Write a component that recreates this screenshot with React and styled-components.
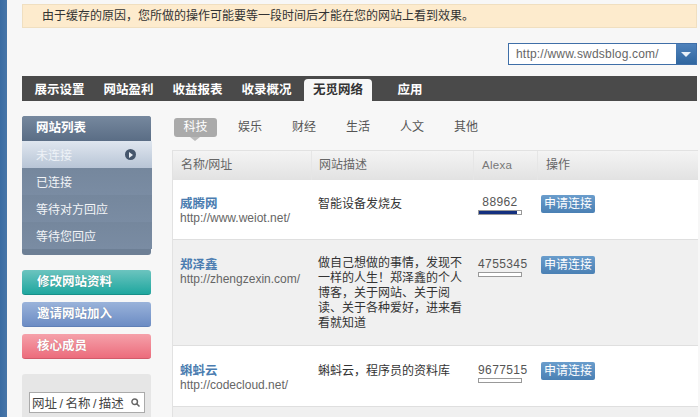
import React from "react";
import styled, { createGlobalStyle } from "styled-components";

const Global = createGlobalStyle`
  html, body { margin: 0; padding: 0; background: #f7f7f7; overflow: hidden; }
  * { box-sizing: border-box; }
  body { font-family: "Liberation Sans", "Noto Sans CJK SC", sans-serif; font-size: 12px; color: #333; }
`;

const Page = styled.div`
  display: flex; width: 700px; height: 417px; overflow: hidden; background: #f7f7f7;
`;
const Strip = styled.div`
  flex: 0 0 7px; background: linear-gradient(90deg, #3a6ca3, #4876a8);
`;
const Main = styled.div`
  flex: 1; padding: 4px 3px 0 15px; min-width: 0;
`;
const Notice = styled.div`
  height: 24px; line-height: 22px; padding-left: 19px; background: #fdebcd;
  border: 1px solid #f0dfc0; font-size: 12px; color: #333;
`;
const SelectRow = styled.div`
  display: flex; justify-content: flex-end; margin-top: 15px;
`;
const SiteSelect = styled.div`
  display: flex; width: 189px; height: 22px; border: 1px solid #3f6fa8; background: #fff;
`;
const SiteText = styled.div`
  flex: 1; padding-left: 7px; line-height: 20px; font-size: 12px; letter-spacing: 0.2px; color: #666;
`;
const Arrow = styled.div`
  flex: 0 0 20px; display: flex; align-items: center; justify-content: center;
  background: linear-gradient(#4f82bb, #2f669f);
  &::after {
    content: ""; border-left: 5px solid transparent; border-right: 5px solid transparent;
    border-top: 5px solid #e8f0f8;
  }
`;
const Nav = styled.div`
  display: flex; align-items: flex-end; height: 25px; margin-top: 11px; padding-left: 11px; background: #4a4a4a;
`;
const NavTab = styled.div`
  height: 22px; line-height: 23px; font-size: 12.5px; font-weight: 700; white-space: nowrap;
  margin-left: ${p => p.$gap}px; text-align: center;
  width: ${p => p.$w}px;
  color: ${p => (p.$active ? "#333" : "#fff")};
  background: ${p => (p.$active ? "#f7f7f7" : "transparent")};
  border-radius: ${p => (p.$active ? "4px 4px 0 0" : "0")};
`;
const Columns = styled.div`
  display: flex; margin-top: 15px;
`;
const Side = styled.div`
  flex: 0 0 129px; width: 129px;
`;
const SideList = styled.div`
  height: 139px; border-radius: 3px; background: #6d7f95;
`;
const SideHead = styled.div`
  height: 25px; line-height: 25px; padding-left: 14px; font-size: 12.5px; font-weight: 700; color: #fff;
  background: linear-gradient(#76889e, #5a6d85); border-radius: 3px 3px 0 0;
`;
const SideItem = styled.div`
  display: flex; align-items: center; justify-content: space-between;
  width: 130px; height: 27px; padding: 0 16px 0 14px; font-size: 12px;
  color: ${p => (p.$active ? "#eef2f7" : "#f2f4f7")};
  background: ${p => (p.$active ? "linear-gradient(#dfe6ef, #b8c5d6)" : "linear-gradient(#75879d, #7a8ca3)")};
`;
const Dot = styled.span`
  width: 11px; height: 11px; border-radius: 50%; background: #45566c; position: relative;
  &::after {
    content: ""; position: absolute; left: 4px; top: 2.5px;
    border-left: 4px solid #e8edf3; border-top: 3px solid transparent; border-bottom: 3px solid transparent;
  }
`;
const SideButtons = styled.div`
  display: flex; flex-direction: column; gap: 7px; margin-top: 15px;
`;
const ColorButton = styled.div`
  height: 25px; line-height: 24px; padding-left: 15px; font-size: 12.5px; font-weight: 700; color: #fff;
  border-radius: 3px; text-shadow: 0 0 1px rgba(0, 0, 0, 0.25);
  background: linear-gradient(${p => p.$from}, ${p => p.$to});
  border-bottom: 1px solid ${p => p.$edge};
`;
const SearchPanel = styled.div`
  height: 60px; margin-top: 15px; padding: 18px 6px 0 7px; background: #e6e6e6; border-radius: 3px;
`;
const SearchBox = styled.div`
  display: flex; align-items: center; justify-content: space-between; height: 21px;
  padding: 0 4px 0 2px; border: 1px solid #aaa; background: #fff; font-size: 12.5px; word-spacing: -1px; color: #444;
`;
const Content = styled.div`
  flex: 1; margin-left: 21px; min-width: 0;
`;
const Cats = styled.div`
  display: flex; height: 21px; margin-left: 2px; padding-top: 2px;
`;
const Cat = styled.div`
  position: relative; width: ${p => (p.$active ? 43 : 24)}px; height: 19px; line-height: 18px; text-align: center;
  margin-right: ${p => (p.$active ? 21 : 30)}px; font-size: 12px; white-space: nowrap;
  color: ${p => (p.$active ? "#fff" : "#555")};
  background: ${p => (p.$active ? "#aaa" : "transparent")};
  border-radius: 3px;
  ${p => p.$active && `&::after {
    content: ""; position: absolute; left: 16px; top: 19px;
    border-left: 5px solid transparent; border-right: 5px solid transparent; border-top: 4px solid #bbb;
  }`}
`;
const Table = styled.div`
  margin: 13px -1px 0 0; border-left: 1px solid #e2e2e2; border-top: 1px solid #e2e2e2;
`;
const Head = styled.div`
  display: grid; grid-template-columns: 138px 162px 64px 1fr; height: 29px;
  background: linear-gradient(#f4f4f4, #e2e2e2);
`;
const HeadCell = styled.div`
  padding-left: ${p => p.$pad}px; line-height: 29px; font-size: ${p => (p.$latin ? 11.5 : 12)}px;
  color: ${p => (p.$latin ? "#777" : "#666")};
  border-left: ${p => (p.$first ? "none" : "1px solid #e6e6e6")};
  letter-spacing: ${p => (p.$latin ? "0.3px" : "0")};
`;
const Row = styled.div`
  display: grid; grid-template-columns: 138px 162px 64px 1fr; height: ${p => p.$h}px;
  background: ${p => (p.$alt ? "#f0f0f0" : "#fff")}; border-bottom: 1px solid #dfdfdf;
`;
const NameCell = styled.div`
  padding: ${p => p.$top}px 0 0 7px;
`;
const SiteName = styled.div`
  font-size: 12.5px; font-weight: 700; line-height: 15px; color: #4a7cb0;
`;
const SiteUrl = styled.div`
  margin-top: -1px; font-size: 12px; line-height: 14px; color: #666; white-space: nowrap;
`;
const DescCell = styled.div`
  padding: ${p => p.$top}px 0 0 7px; font-size: 12px; line-height: 15px; color: #333; width: 153px;
`;
const RankCell = styled.div`
  padding: ${p => p.$top}px 0 0 5px;
`;
const RankNum = styled.div`
  width: ${p => (p.$center ? 44 : 50)}px; text-align: ${p => (p.$center ? "center" : "left")}; white-space: nowrap;
  font-size: 12px; line-height: 13px; letter-spacing: 0.4px; color: #555;
`;
const RankBar = styled.div`
  width: 44px; height: 5px; margin-top: 1px; border: 1px solid #999; background: #fff;
  &::after { content: ""; display: block; height: 100%; width: var(--fill); background: #14307f; }
`;
const ActionCell = styled.div`
  padding: ${p => p.$top}px 0 0 4px;
`;
const ApplyButton = styled.div`
  width: 54px; height: 18px; line-height: 19px; text-align: center; font-size: 12px; color: #fff;
  border-radius: 2px; background: linear-gradient(#6a9dcc, #4a80b4);
`;

const navs = [
  { t: "展示设置", w: 53, g: 0 },
  { t: "网站盈利", w: 53, g: 16 },
  { t: "收益报表", w: 53, g: 16 },
  { t: "收录概况", w: 53, g: 16 },
  { t: "无觅网络", w: 68, g: 11, active: true },
  { t: "应用", w: 26, g: 25 },
];
const cats = ["科技", "娱乐", "财经", "生活", "人文", "其他"];
const rows = [
  { h: 60, name: "威腾网", url: "http://www.weiot.net/", top: 17, dt: 17, rt: 16, at: 15, desc: "智能设备发烧友", rank: "88962", fill: "90%", center: true },
  { h: 106, alt: true, name: "郑泽鑫", url: "http://zhengzexin.com/", top: 18, dt: 16, rt: 18, at: 16, desc: "做自己想做的事情，发现不一样的人生！郑泽鑫的个人博客，关于网站、关于阅读、关于各种爱好，进来看看就知道", rank: "4755345", fill: "0%" },
  { h: 61, name: "蝌蚪云", url: "http://codecloud.net/", top: 18, dt: 18, rt: 18, at: 16, desc: "蝌蚪云，程序员的资料库", rank: "9677515", fill: "0%" },
];

export default function App() {
  return (
    <Page>
      <Global />
      <Strip />
      <Main>
        <Notice>由于缓存的原因，您所做的操作可能要等一段时间后才能在您的网站上看到效果。</Notice>
        <SelectRow>
          <SiteSelect>
            <SiteText>http://www.swdsblog.com/</SiteText>
            <Arrow />
          </SiteSelect>
        </SelectRow>
        <Nav>
          {navs.map(n => (
            <NavTab key={n.t} $w={n.w} $gap={n.g} $active={n.active}>{n.t}</NavTab>
          ))}
        </Nav>
        <Columns>
          <Side>
            <SideList>
              <SideHead>网站列表</SideHead>
              <SideItem $active>未连接<Dot /></SideItem>
              <SideItem>已连接</SideItem>
              <SideItem>等待对方回应</SideItem>
              <SideItem>等待您回应</SideItem>
            </SideList>
            <SideButtons>
              <ColorButton $from="#6cc4bf" $to="#1fa79f" $edge="#178f88">修改网站资料</ColorButton>
              <ColorButton $from="#9ab3da" $to="#6c8cc4" $edge="#5f7fb6">邀请网站加入</ColorButton>
              <ColorButton $from="#f5a1aa" $to="#ec6c7c" $edge="#d25a6a">核心成员</ColorButton>
            </SideButtons>
            <SearchPanel>
              <SearchBox>
                网址 / 名称 / 描述
                <svg width="9" height="9" viewBox="0 0 11 11" fill="none" stroke="#666" strokeWidth="1.8">
                  <circle cx="4.5" cy="4.5" r="3.4" />
                  <path d="M7 7l3.4 3.4" />
                </svg>
              </SearchBox>
            </SearchPanel>
          </Side>
          <Content>
            <Cats>
              {cats.map((c, i) => <Cat key={c} $active={i === 0}>{c}</Cat>)}
            </Cats>
            <Table>
              <Head>
                <HeadCell $pad={8} $first>名称/网址</HeadCell>
                <HeadCell $pad={7}>网站描述</HeadCell>
                <HeadCell $pad={8} $latin>Alexa</HeadCell>
                <HeadCell $pad={8}>操作</HeadCell>
              </Head>
              {rows.map(r => (
                <Row key={r.name} $h={r.h} $alt={r.alt}>
                  <NameCell $top={r.top}>
                    <SiteName>{r.name}</SiteName>
                    <SiteUrl>{r.url}</SiteUrl>
                  </NameCell>
                  <DescCell $top={r.dt}>{r.desc}</DescCell>
                  <RankCell $top={r.rt}>
                    <RankNum $center={r.center}>{r.rank}</RankNum>
                    <RankBar style={{ "--fill": r.fill }} />
                  </RankCell>
                  <ActionCell $top={r.at}><ApplyButton>申请连接</ApplyButton></ActionCell>
                </Row>
              ))}
              <Row $h={20} $alt />
            </Table>
          </Content>
        </Columns>
      </Main>
    </Page>
  );
}
